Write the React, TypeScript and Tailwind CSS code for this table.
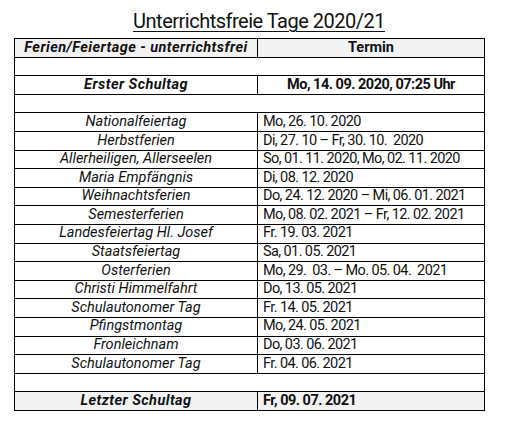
type Row = { name?: string; date?: string; kind?: "blank" | "bold" | "last" };

const rows: Row[] = [
  { kind: "blank" },
  { name: "Erster Schultag", date: "Mo, 14. 09. 2020, 07:25 Uhr", kind: "bold" },
  { kind: "blank" },
  { name: "Nationalfeiertag", date: "Mo, 26. 10. 2020" },
  { name: "Herbstferien", date: "Di, 27. 10 – Fr, 30. 10.  2020" },
  { name: "Allerheiligen, Allerseelen", date: "So, 01. 11. 2020, Mo, 02. 11. 2020" },
  { name: "Maria Empfängnis", date: "Di, 08. 12. 2020" },
  { name: "Weihnachtsferien", date: "Do, 24. 12. 2020 – Mi, 06. 01. 2021" },
  { name: "Semesterferien", date: "Mo, 08. 02. 2021 – Fr, 12. 02. 2021" },
  { name: "Landesfeiertag Hl. Josef", date: "Fr. 19. 03. 2021" },
  { name: "Staatsfeiertag", date: "Sa, 01. 05. 2021" },
  { name: "Osterferien", date: "Mo, 29.  03. – Mo. 05. 04.  2021" },
  { name: "Christi Himmelfahrt", date: "Do, 13. 05. 2021" },
  { name: "Schulautonomer Tag", date: "Fr. 14. 05. 2021" },
  { name: "Pfingstmontag", date: "Mo, 24. 05. 2021" },
  { name: "Fronleichnam", date: "Do, 03. 06. 2021" },
  { name: "Schulautonomer Tag", date: "Fr. 04. 06. 2021" },
  { kind: "blank" },
  { name: "Letzter Schultag", date: "Fr, 09. 07. 2021", kind: "last" },
];

export default function App() {
  return (
    <div className="w-[513px] h-[424px] bg-white text-[#111] font-['Roboto',sans-serif]">
      <h1 className="pt-[9px] pl-[5px] text-center text-[20px] leading-[24px] tracking-[-0.5px] underline underline-offset-[3px] decoration-1">
        Unterrichtsfreie Tage 2020/21
      </h1>
      <table className="ml-[14px] mt-[5px] w-[471px] border-collapse text-[14.5px] leading-none">
        <colgroup>
          <col className="w-[243px]" />
          <col />
        </colgroup>
        <tbody>
          <tr className="h-[18.6px] bg-[#f2f2f2]">
            <td className="border border-black text-center italic font-bold tracking-[0.45px] p-0">
              Ferien/Feiertage - unterrichtsfrei
            </td>
            <td className="border border-black text-center font-bold p-0">Termin</td>
          </tr>
          {rows.map((r, i) =>
            r.kind === "blank" ? (
              <tr key={i} className="h-[18.6px]">
                <td colSpan={2} className="border border-black p-0"></td>
              </tr>
            ) : (
              <tr key={i} className={`h-[18.6px] ${r.kind === "last" ? "bg-[#f2f2f2]" : ""}`}>
                <td
                  className={`border border-black text-center italic p-0 ${
                    r.kind ? "font-bold tracking-[0.45px]" : ""
                  }`}
                >
                  {r.name}
                </td>
                <td
                  className={`border border-black p-0 whitespace-pre ${
                    r.kind === "bold"
                      ? "text-center font-bold tracking-[-0.5px]"
                      : r.kind === "last"
                      ? "pl-[5px] font-bold tracking-[-0.5px]"
                      : "pl-[5px] tracking-[-0.6px]"
                  }`}
                >
                  {r.date}
                </td>
              </tr>
            )
          )}
        </tbody>
      </table>
    </div>
  );
}
